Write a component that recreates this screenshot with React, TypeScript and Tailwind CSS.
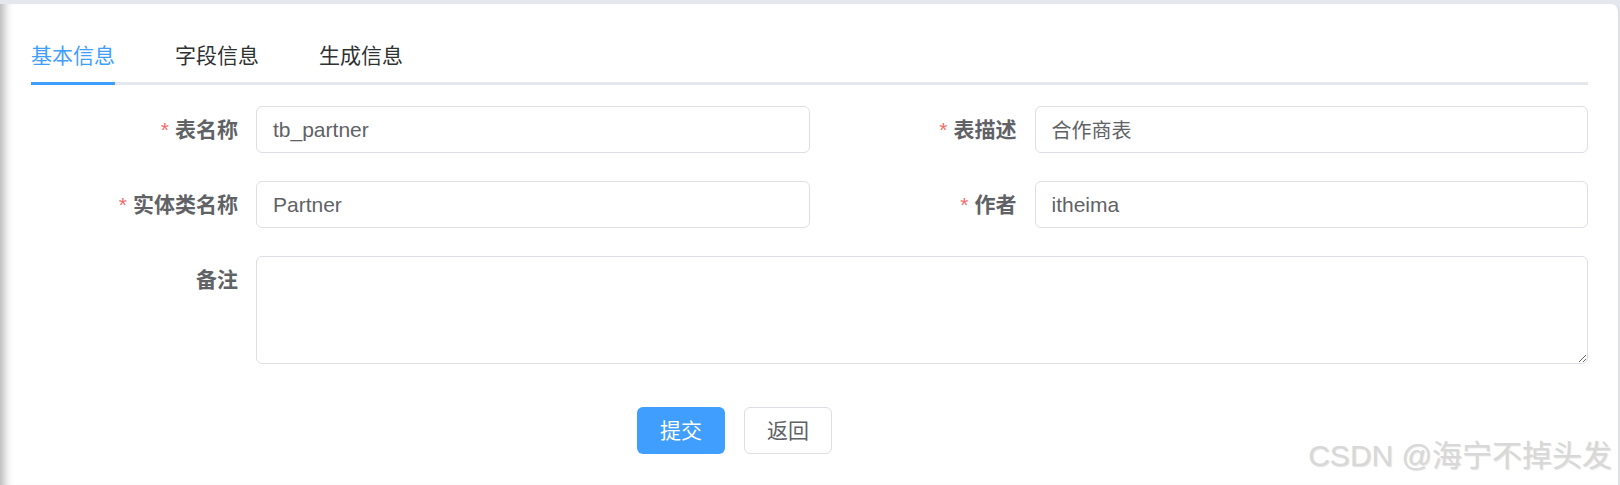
import React from "react";

const font = "font-['Liberation_Sans','Noto_Sans_CJK_SC',sans-serif]";

function Label({ text, required }: { text: string; required?: boolean }) {
  return (
    <label className="h-[47px] w-[225px] shrink-0 pr-[18px] text-right text-[21px] font-bold leading-[47px] text-[#606266]">
      {required && <span className="mr-[6px] font-normal text-[#f56c6c]">*</span>}
      {text}
    </label>
  );
}

function Field({ label, value, small }: { label: string; value: string; small?: boolean }) {
  return (
    <div className="flex">
      <Label text={label} required />
      <input
        readOnly
        value={value}
        className={`h-[47px] min-w-0 flex-1 rounded-[6px] border border-[#dcdfe6] bg-white px-[16px] text-[#606266] outline-none ${
          small ? "text-[20px]" : "text-[21px]"
        }`}
      />
    </div>
  );
}

export default function App() {
  const tabs = ["基本信息", "字段信息", "生成信息"];

  return (
    <div className={`relative h-[485px] w-[1620px] overflow-hidden bg-[#e4e7ed] pt-[4px] ${font}`}>
      <div className="h-full rounded-tr-[8px] border-r-2 border-[#dcdfe6] bg-white pl-[31px] pr-[30px] pt-[21px] shadow-[inset_12px_0_10px_-8px_rgba(0,0,0,0.3)]">
        {/* tabs */}
        <div className="flex h-[60px] items-center border-b-[3px] border-[#e4e7ed]">
          {tabs.map((t, i) => (
            <div
              key={t}
              className={`relative flex h-full items-center pt-[4px] text-[21px] ${
                i === 0 ? "pl-0 pr-[30px] text-[#409eff]" : "px-[30px] text-[#303133]"
              }`}
            >
              {t}
              {i === 0 && <div className="absolute bottom-[-3px] left-0 h-[3px] w-[84px] bg-[#409eff]" />}
            </div>
          ))}
        </div>

        {/* form */}
        <div className="mt-[21px] flex flex-col gap-[28px]">
          <div className="grid grid-cols-2">
            <Field label="表名称" value="tb_partner" />
            <Field label="表描述" value="合作商表" small />
          </div>
          <div className="grid grid-cols-2">
            <Field label="实体类名称" value="Partner" />
            <Field label="作者" value="itheima" />
          </div>
          <div className="flex">
            <Label text="备注" />
            <textarea className="h-[108px] min-w-0 flex-1 rounded-[6px] border border-[#dcdfe6] bg-white px-[16px] py-[8px] text-[21px] text-[#606266] outline-none" />
          </div>
        </div>

        <div className="mt-[43px] flex gap-[19px] pl-[606px]">
          <button className="h-[47px] w-[88px] rounded-[6px] bg-[#409eff] text-[21px] text-white">提交</button>
          <button className="h-[47px] w-[88px] rounded-[6px] border border-[#dcdfe6] bg-white text-[21px] text-[#606266]">
            返回
          </button>
        </div>
      </div>

      <div className="absolute bottom-[14px] right-[8px] text-[30px] leading-none text-[#d8d8d8] [text-shadow:1px_1px_1px_rgba(0,0,0,0.12)]">
        CSDN @海宁不掉头发
      </div>
    </div>
  );
}
